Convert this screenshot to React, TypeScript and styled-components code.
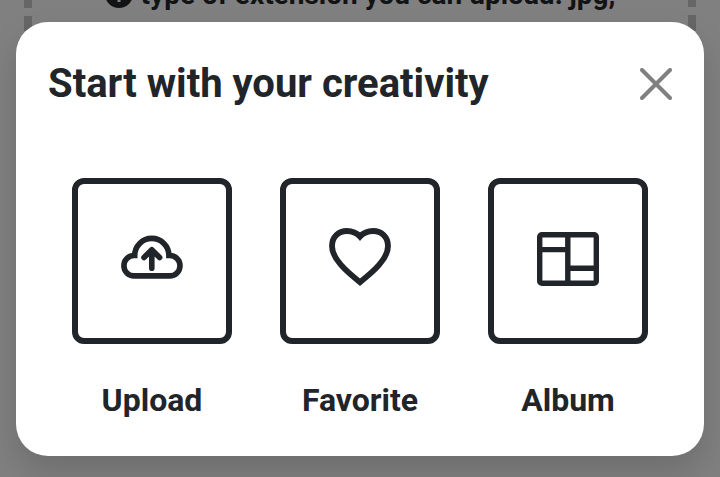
import React from "react";
import styled, { createGlobalStyle } from "styled-components";

const Global = createGlobalStyle`
  * { box-sizing: border-box; }
  html, body { margin: 0; height: 100%; overflow: hidden; }
  body { background: #808080; color: #212529; font-family: Roboto, sans-serif; }
`;

const Page = styled.div`
  position: relative;
  width: 720px;
  height: 477px;
  overflow: hidden;
  padding: 0 24px;
`;

const DropZone = styled.div`
  display: flex;
  justify-content: space-between;
  height: 40px;
`;

const Dashes = styled.div<{ $shift: number }>`
  width: 8px;
  height: 40px;
  background: repeating-linear-gradient(#666 0 16px, transparent 16px 24px);
  background-position: 0 ${(p) => p.$shift}px;
  background-size: 8px 24px;
`;

const Hint = styled.div`
  display: flex;
  align-items: center;
  gap: 8px;
  height: 32px;
  margin-top: -21px;
  font-size: 28px;
  line-height: 32px;
  font-weight: 700;
  color: #111315;
  white-space: nowrap;
`;

const InfoIcon = styled.svg`
  margin-bottom: 2px;
`;

const Modal = styled.section`
  position: absolute;
  left: 16px;
  top: 22px;
  width: 688px;
  height: 434px;
  border-radius: 32px;
  background: #fff;
  box-shadow: 0 16px 32px rgba(0, 0, 0, 0.15);
`;

const Header = styled.header`
  display: flex;
  align-items: center;
  justify-content: space-between;
  padding: 32px 32px 0;
  height: 92px;
`;

const Title = styled.h1`
  margin: 0;
  font-size: 40px;
  line-height: 60px;
  font-weight: 700;
  white-space: nowrap;
`;

const CloseButton = styled.button`
  display: flex;
  padding: 0;
  border: 0;
  background: none;
`;

const Options = styled.div`
  display: grid;
  grid-template-columns: repeat(3, 160px);
  gap: 48px;
  padding: 64px 56px 0;
`;

const Option = styled.div`
  display: flex;
  flex-direction: column;
  align-items: center;
  gap: 32px;
`;

const Tile = styled.div`
  display: flex;
  justify-content: center;
  width: 160px;
  height: 166px;
  padding-top: 41px;
  border: 6px solid #212529;
  border-radius: 12px;
`;

const Label = styled.div`
  font-size: 32px;
  line-height: 48px;
  font-weight: 700;
`;

const Icon = ({ stroke = 5.4, children }: { stroke?: number; children: React.ReactNode }) => (
  <svg width="64" height="64" viewBox="0 0 64 64" fill="none" stroke="#212529" strokeWidth={stroke}>
    {children}
  </svg>
);

const options = [
  {
    label: "Upload",
    icon: (
      <Icon stroke={5.6}>
        <path d="M14.1 50.9H49.8A10.2 10.2 0 0 0 49.8 30.5H48.9A17.1 17.1 0 0 0 14.7 30.5H14.1A10.2 10.2 0 0 0 14.1 50.9Z" />
        <path d="M31.8 43.3V27M24 32.6L31.8 24.8L39.6 32.6" strokeLinecap="round" strokeLinejoin="round" />
      </Icon>
    ),
  },
  {
    label: "Favorite",
    icon: (
      <Icon stroke={5.8}>
        <path d="M32 57.2C18.5 46.5 4 34 4 21C4 12 10.5 6 18.9 6C24 6 28.8 8 32 11.6C35.2 8 40 6 45.1 6C53.5 6 60 12 60 21C60 34 45.5 46.5 32 57.2Z" />
      </Icon>
    ),
  },
  {
    label: "Album",
    icon: (
      <Icon>
        <rect x="3.7" y="9.7" width="56.6" height="48.6" rx="2.2" />
        <path d="M31.8 9V58M3 24.6H32M32 43.2H60" />
      </Icon>
    ),
  },
];

export default function App() {
  return (
    <Page>
      <Global />
      <DropZone>
        <Dashes $shift={-8} />
        <Hint>
          <InfoIcon width="28" height="28" viewBox="0 0 28 28">
            <circle cx="14" cy="14" r="14" fill="#111315" />
            <path d="M14 6V8M14 12V22" stroke="#808080" strokeWidth="3" />
          </InfoIcon>
          type of extension you can upload: jpg,
        </Hint>
        <Dashes $shift={-9} />
      </DropZone>
      <Modal>
        <Header>
          <Title>Start with your creativity</Title>
          <CloseButton aria-label="Close">
            <svg width="32" height="32" viewBox="0 0 32 32" stroke="#808080" strokeWidth="4" strokeLinecap="round">
              <path d="M2 2L30 30M30 2L2 30" />
            </svg>
          </CloseButton>
        </Header>
        <Options>
          {options.map((o) => (
            <Option key={o.label}>
              <Tile>{o.icon}</Tile>
              <Label>{o.label}</Label>
            </Option>
          ))}
        </Options>
      </Modal>
    </Page>
  );
}
